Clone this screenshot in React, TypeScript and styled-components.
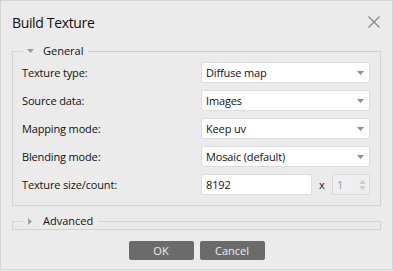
import React from 'react';
import styled, { createGlobalStyle } from 'styled-components';

const GlobalStyle = createGlobalStyle`
  html, body {
    margin: 0;
    padding: 0;
    background: #ebebeb;
  }
  body {
    font-family: 'Open Sans', 'Noto Sans', sans-serif;
    color: #111;
  }
`;

const rows = [
  { label: 'Texture type:', value: 'Diffuse map' },
  { label: 'Source data:', value: 'Images' },
  { label: 'Mapping mode:', value: 'Keep uv' },
  { label: 'Blending mode:', value: 'Mosaic (default)' },
];

const ArrowDown = ({ color = '#8c8c8c' }: { color?: string }) => (
  <svg width="7" height="4" viewBox="0 0 7 4">
    <path d="M0 0H7L3.5 4Z" fill={color} />
  </svg>
);

const ArrowRight = () => (
  <svg width="7" height="7" viewBox="0 0 7 7">
    <path d="M1 0V7L5 3.5Z" fill="#a0a0a0" />
  </svg>
);

const App: React.FC = () => {
  return (
    <>
      <GlobalStyle />
      <Dialog>
        <Header>
          <Title>Build Texture</Title>
          <CloseButton aria-label="Close">
            <svg width="12" height="12" viewBox="0 0 12 12">
              <path
                d="M0.5 0.5L11.5 11.5M11.5 0.5L0.5 11.5"
                stroke="#8a8a8a"
                strokeWidth="1.4"
              />
            </svg>
          </CloseButton>
        </Header>

        <Group>
          <Legend>
            <ArrowDown color="#9c9c9c" />
            <span>General</span>
          </Legend>
          <Form>
            {rows.map((row) => (
              <React.Fragment key={row.label}>
                <Label>{row.label}</Label>
                <Combo>
                  <span>{row.value}</span>
                  <ArrowDown />
                </Combo>
              </React.Fragment>
            ))}
            <Label>Texture size/count:</Label>
            <SizeRow>
              <TextInput>8192</TextInput>
              <Times>x</Times>
              <SpinBox>
                <span>1</span>
                <SpinArrows>
                  <svg width="7" height="4" viewBox="0 0 7 4">
                    <path d="M0 4H7L3.5 0Z" fill="#cdcdcd" />
                  </svg>
                  <svg width="7" height="4" viewBox="0 0 7 4">
                    <path d="M0 0H7L3.5 4Z" fill="#cdcdcd" />
                  </svg>
                </SpinArrows>
              </SpinBox>
            </SizeRow>
          </Form>
        </Group>

        <Group $collapsed>
          <Legend>
            <ArrowRight />
            <span>Advanced</span>
          </Legend>
        </Group>

        <Footer>
          <Button>OK</Button>
          <Button>Cancel</Button>
        </Footer>
      </Dialog>
    </>
  );
};

const Dialog = styled.div`
  box-sizing: border-box;
  width: 393px;
  height: 270px;
  border: 1px solid #d4d4d4;
  background: #ebebeb;
  display: flex;
  flex-direction: column;
`;

const Header = styled.div`
  height: 42px;
  flex-shrink: 0;
  display: flex;
  align-items: center;
  justify-content: space-between;
  padding: 0 12px 0 11px;
`;

const Title = styled.h1`
  margin: 0;
  font-size: 14px;
  letter-spacing: -0.35px;
  font-weight: 400;
  color: #111;
`;

const CloseButton = styled.div`
  display: flex;
  width: 12px;
  height: 12px;
`;

const Group = styled.fieldset<{ $collapsed?: boolean }>`
  margin: 0 11px ${(p) => (p.$collapsed ? '11px' : '7px')} 11px;
  padding: ${(p) => (p.$collapsed ? '0 10px 0 9px' : '3px 10px 10px 9px')};
  border: 1px solid #d3d3d3;
  min-width: 0;
`;

const Legend = styled.legend`
  display: flex;
  align-items: center;
  gap: 9px;
  margin-left: 1px;
  padding: 0 5px 0 4px;
  font-size: 11px;
  line-height: 16px;
  color: #111;
`;

const Form = styled.div`
  display: grid;
  grid-template-columns: 179px 1fr;
  grid-auto-rows: 21px;
  row-gap: 7px;
  align-items: center;
`;

const Label = styled.div`
  font-size: 11px;
  letter-spacing: -0.15px;
  color: #111;
`;

const Field = styled.div`
  box-sizing: border-box;
  height: 21px;
  display: flex;
  align-items: center;
  background: #fff;
  border: 1px solid #dcdcdc;
  border-radius: 2px;
  font-size: 11px;
  letter-spacing: -0.15px;
  color: #111;
  padding: 0 5px 0 4px;
`;

const Combo = styled(Field)`
  justify-content: space-between;
`;

const SizeRow = styled.div`
  display: flex;
  align-items: center;
`;

const TextInput = styled(Field)`
  width: 111px;
`;

const Times = styled.span`
  width: 20px;
  text-align: center;
  font-size: 11px;
  color: #141428;
`;

const SpinBox = styled(Field)`
  flex: 1;
  justify-content: space-between;
  background: #efefef;
  border-color: #d9d9d9;
  color: #999;
  padding-right: 3px;
`;

const SpinArrows = styled.div`
  display: flex;
  flex-direction: column;
  gap: 2px;
`;

const Footer = styled.div`
  display: flex;
  justify-content: center;
  gap: 6px;
`;

const Button = styled.button`
  width: 65px;
  height: 19px;
  padding: 0;
  border: none;
  border-radius: 2px;
  background: #6b6b6b;
  color: #eeeeee;
  font-family: inherit;
  font-size: 11px;
  line-height: 19px;
`;

export default App;
